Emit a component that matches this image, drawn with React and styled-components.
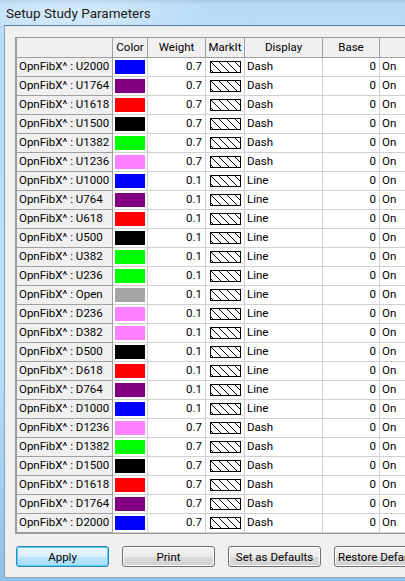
import React from "react";
import styled, { createGlobalStyle } from "styled-components";

const GlobalStyle = createGlobalStyle`
  html, body { margin: 0; padding: 0; overflow: hidden; }
  body { font-family: Roboto, "Noto Sans", sans-serif; }
`;

const Window = styled.div`
  width: 405px;
  height: 581px;
  overflow: hidden;
  display: flex;
  flex-direction: column;
  background: linear-gradient(180deg, #aac8e6 0px, #b8dcf8 5px, #bce0fa 60%, #8fc0e8 100%);
`;

const TitleBar = styled.div`
  height: 25px;
  flex: none;
  display: flex;
  align-items: center;
  padding-left: 6px;
  font-family: Roboto, "Noto Sans", sans-serif;
  font-size: 13.5px;
  color: #1a1a1a;
  background: radial-gradient(ellipse 140px 30px at 70px 14px, rgba(255,255,255,0.45), rgba(255,255,255,0) 100%);
`;

const Client = styled.div`
  flex: 1;
  margin-left: 4px;
  margin-bottom: 3px;
  border-top: 1px solid #5d7d9c;
  box-shadow: inset 0 1px 0 #dfeaf4;
  border-left: 1px solid #8aa2b8;
  border-bottom: 1px solid #8aa2b8;
  background: #f0f0f0;
  padding: 11px 0 0 10px;
  overflow: hidden;
`;

const Grid = styled.div`
  display: grid;
  grid-template-columns: 96px 35px 58px 39px 78px 57px 70px;
  grid-auto-rows: 19px;
  grid-template-rows: 20px;
  width: max-content;
  border-left: 2px solid #9b9b9b;
  border-top: 1px solid #9b9b9b;
  border-bottom: 1px solid #9b9b9b;
  font-family: Roboto, "Noto Sans", sans-serif;
  font-size: 11.5px;
  color: #000;
`;

const HeadCell = styled.div`
  box-sizing: border-box;
  background: #f0f0f0;
  border-right: 1px solid #a0a0a0;
  border-bottom: 1px solid #a0a0a0;
  display: flex;
  align-items: center;
  justify-content: center;
  white-space: nowrap;
  line-height: 1;
`;

const NameCell = styled.div`
  box-sizing: border-box;
  background: #f0f0f0;
  border-right: 1px solid #a0a0a0;
  border-bottom: 1px solid #a0a0a0;
  display: flex;
  align-items: center;
  padding-left: 2px;
  white-space: nowrap;
  overflow: hidden;
  line-height: 1;
`;

const Cell = styled.div`
  box-sizing: border-box;
  background: #fff;
  border-right: 1px solid #d0d0d0;
  border-bottom: 1px solid #d0d0d0;
  display: flex;
  align-items: center;
  justify-content: ${(p) => (p.$align === "right" ? "flex-end" : p.$align === "center" ? "center" : "flex-start")};
  padding: 0 ${(p) => (p.$align === "right" ? "3px" : "0")} 0 ${(p) => (p.$align === "left" ? "2px" : "0")};
  white-space: nowrap;
  overflow: hidden;
  line-height: 1;
`;

const Swatch = styled.div`
  width: 30px;
  height: 14px;
  background: ${(p) => p.$color};
`;

const ButtonRow = styled.div`
  display: flex;
  gap: 13px;
  margin-top: 12px;
  margin-left: 1px;
`;

const Button = styled.button`
  flex: none;
  width: 93px;
  height: 21px;
  box-sizing: border-box;
  padding: 0;
  border-radius: 3px;
  border: 1px solid ${(p) => (p.$default ? "#3c7fb1" : "#707070")};
  box-shadow: inset 0 0 0 1px ${(p) => (p.$default ? "#48d8fb" : "#fbfbfb")};
  background: ${(p) =>
    p.$default
      ? "linear-gradient(180deg, #eaf6fd 0%, #d9f0fc 50%, #bee6fd 51%, #a7d9f5 100%)"
      : "linear-gradient(180deg, #f2f2f2 0%, #ebebeb 50%, #dddddd 51%, #cfcfcf 100%)"};
  font-family: Roboto, "Noto Sans", sans-serif;
  font-size: 11.5px;
  color: #000;
  white-space: nowrap;
  overflow: hidden;
  text-align: center;
`;

const MarkIt = () => (
  <svg width="31" height="12" viewBox="0 0 31 12">
    <defs>
      <clipPath id="mk">
        <rect x="0" y="0" width="31" height="12" />
      </clipPath>
    </defs>
    <g clipPath="url(#mk)" stroke="#000" strokeWidth="1" shapeRendering="crispEdges">
      {[-8, 0, 8, 16, 24].map((x) => (
        <line key={x} x1={x} y1={0} x2={x + 12} y2={12} />
      ))}
    </g>
    <rect x="0.5" y="0.5" width="30" height="11" fill="none" stroke="#000" strokeWidth="1" />
  </svg>
);

const C = {
  blue: "#0000ff",
  purple: "#800080",
  red: "#ff0000",
  black: "#000000",
  lime: "#00ff00",
  pink: "#ff80ff",
  gray: "#a6a6a6",
};

const rows = [
  ["U2000", C.blue, "0.7", "Dash"],
  ["U1764", C.purple, "0.7", "Dash"],
  ["U1618", C.red, "0.7", "Dash"],
  ["U1500", C.black, "0.7", "Dash"],
  ["U1382", C.lime, "0.7", "Dash"],
  ["U1236", C.pink, "0.7", "Dash"],
  ["U1000", C.blue, "0.1", "Line"],
  ["U764", C.purple, "0.1", "Line"],
  ["U618", C.red, "0.1", "Line"],
  ["U500", C.black, "0.1", "Line"],
  ["U382", C.lime, "0.1", "Line"],
  ["U236", C.lime, "0.1", "Line"],
  ["Open", C.gray, "0.1", "Line"],
  ["D236", C.pink, "0.1", "Line"],
  ["D382", C.pink, "0.1", "Line"],
  ["D500", C.black, "0.1", "Line"],
  ["D618", C.red, "0.1", "Line"],
  ["D764", C.purple, "0.1", "Line"],
  ["D1000", C.blue, "0.1", "Line"],
  ["D1236", C.pink, "0.7", "Dash"],
  ["D1382", C.lime, "0.7", "Dash"],
  ["D1500", C.black, "0.7", "Dash"],
  ["D1618", C.red, "0.7", "Dash"],
  ["D1764", C.purple, "0.7", "Dash"],
  ["D2000", C.blue, "0.7", "Dash"],
];

export default function App() {
  return (
    <>
      <GlobalStyle />
      <Window>
        <TitleBar>Setup Study Parameters</TitleBar>
        <Client>
          <Grid>
            <HeadCell />
            <HeadCell>Color</HeadCell>
            <HeadCell>Weight</HeadCell>
            <HeadCell>MarkIt</HeadCell>
            <HeadCell>Display</HeadCell>
            <HeadCell>Base</HeadCell>
            <HeadCell />
            {rows.map(([name, color, weight, display]) => (
              <React.Fragment key={name}>
                <NameCell>OpnFibX^ : {name}</NameCell>
                <Cell $align="center">
                  <Swatch $color={color} />
                </Cell>
                <Cell $align="right">{weight}</Cell>
                <Cell $align="center">
                  <MarkIt />
                </Cell>
                <Cell $align="left">{display}</Cell>
                <Cell $align="right">0</Cell>
                <Cell $align="left">On</Cell>
              </React.Fragment>
            ))}
          </Grid>
          <ButtonRow>
            <Button $default>Apply</Button>
            <Button>Print</Button>
            <Button>Set as Defaults</Button>
            <Button>Restore Defaults</Button>
          </ButtonRow>
        </Client>
      </Window>
    </>
  );
}
